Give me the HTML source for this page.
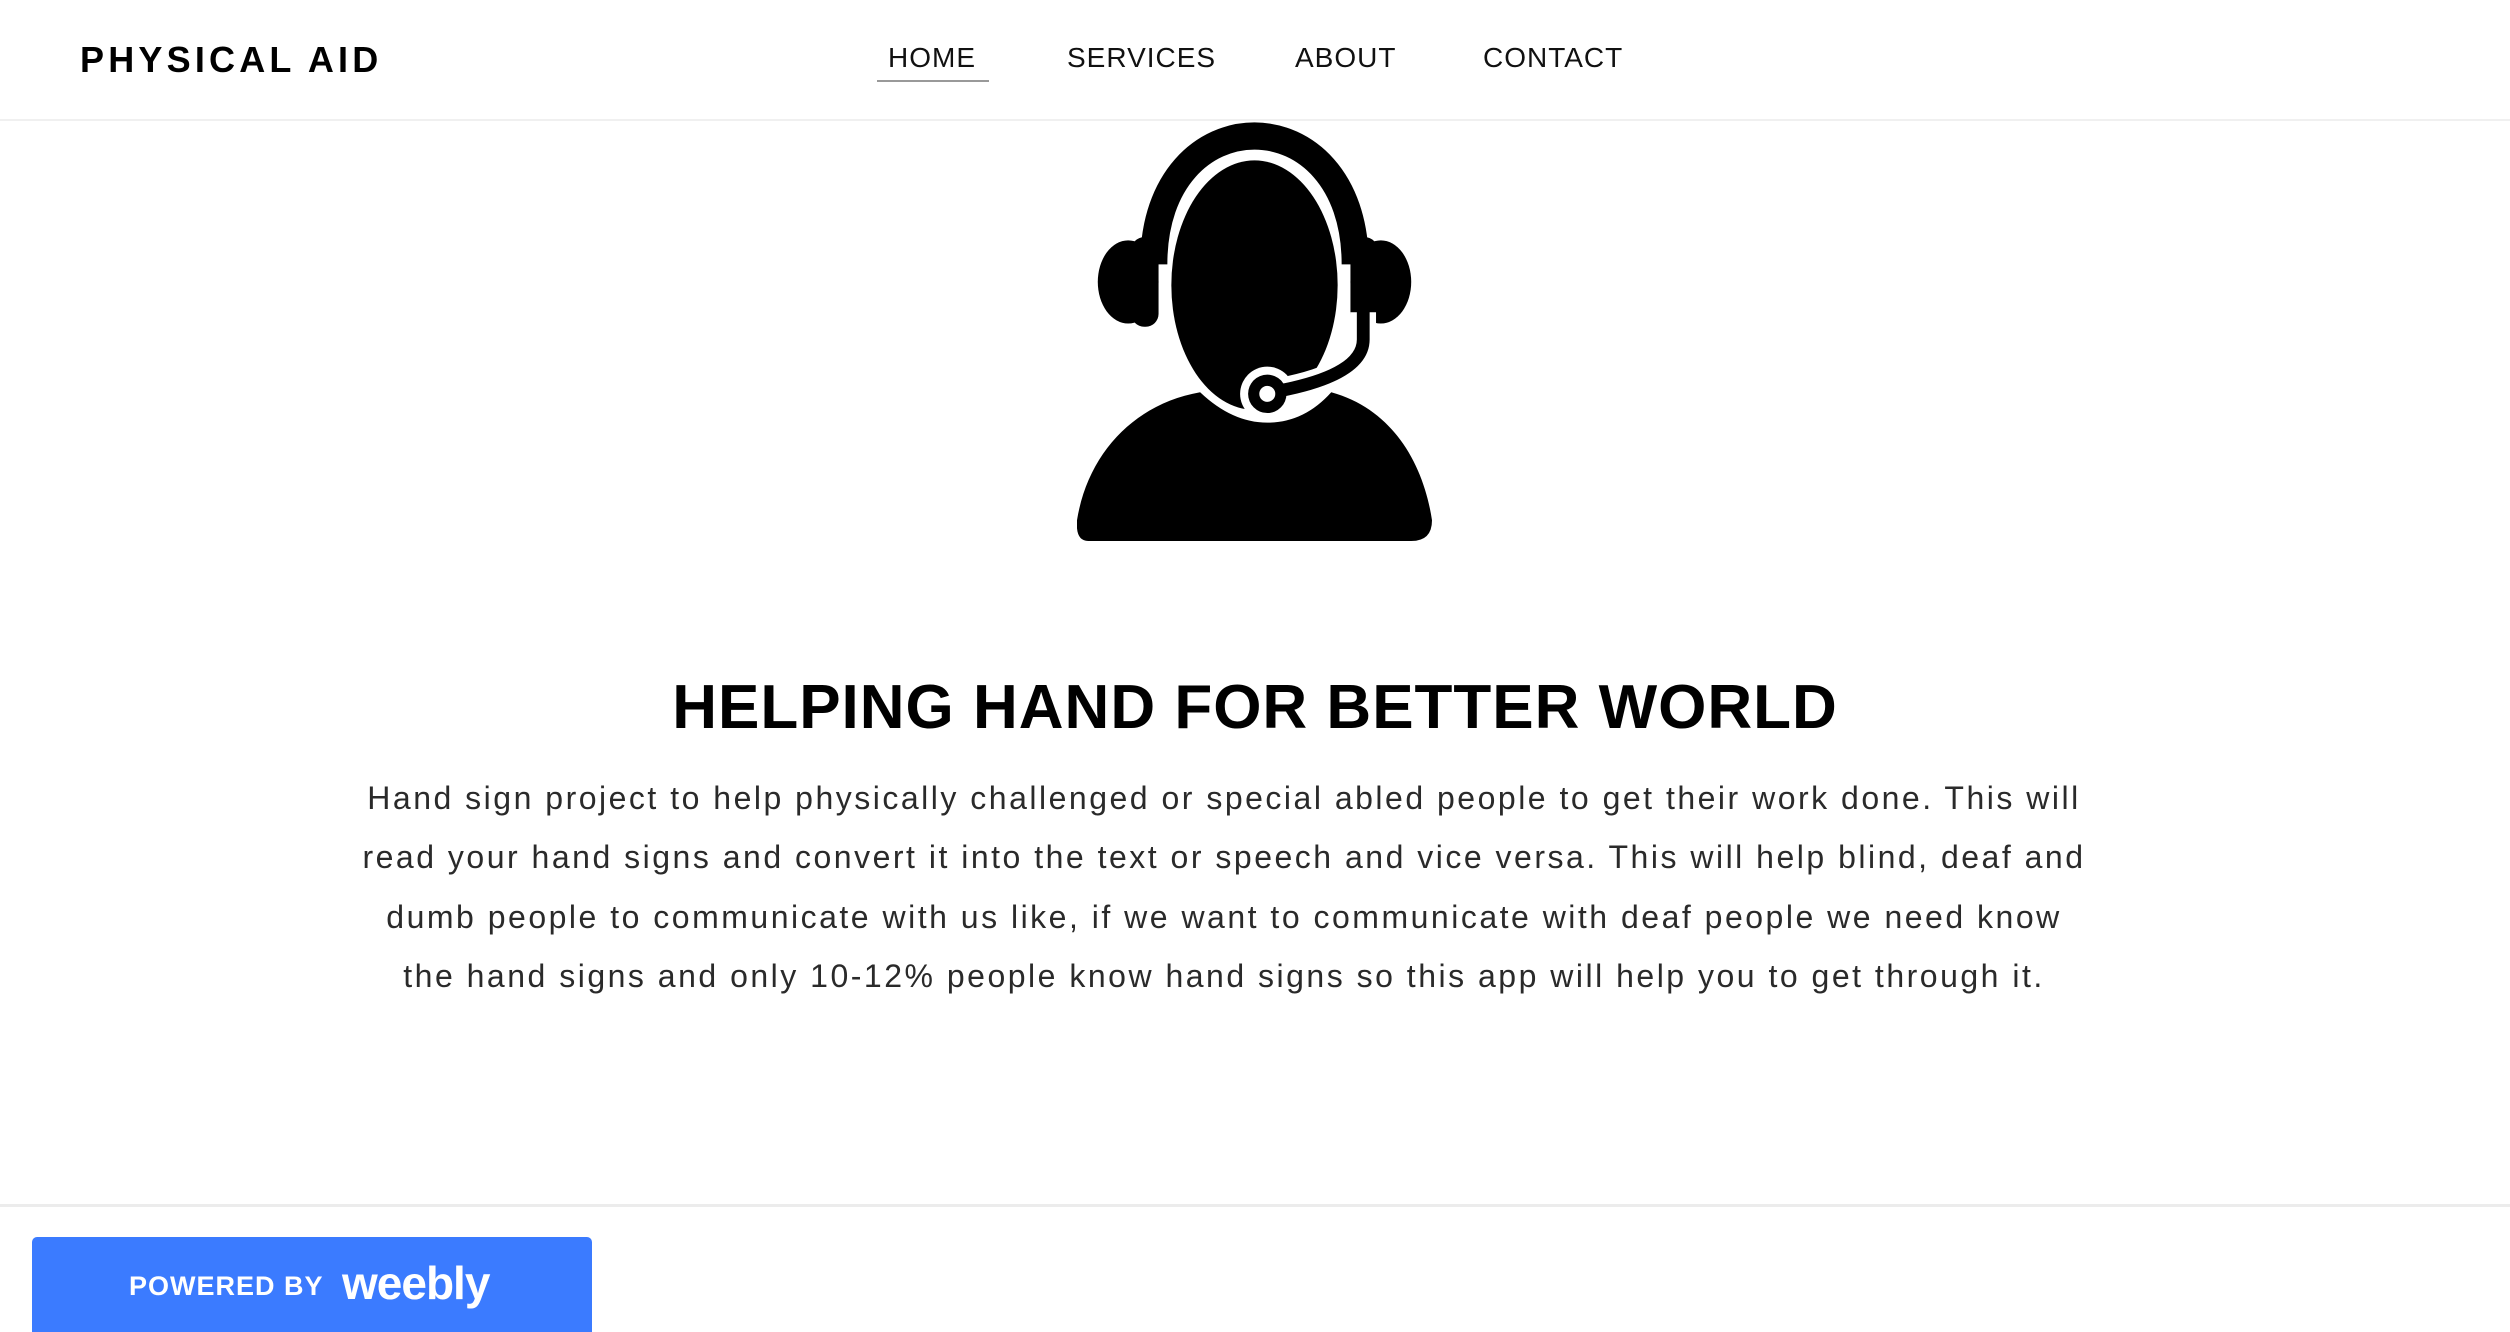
<!DOCTYPE html>
<html><head><meta charset="utf-8"><style>
html,body{margin:0;padding:0;background:#fff;width:2510px;height:1332px;overflow:hidden;position:relative;font-family:"Liberation Sans",sans-serif;color:#000}
.hdr{position:absolute;left:0;top:0;width:2510px;height:119px;border-bottom:2px solid #f0f0f0}
.logo{position:absolute;left:80px;top:38px;font-size:36px;font-weight:bold;letter-spacing:4.2px;line-height:44px}
.nav{position:absolute;top:40px;font-size:28px;letter-spacing:1px;line-height:36px;color:#111}
.ul{position:absolute;left:877px;top:80px;width:112px;height:2px;background:#999}
h1{position:absolute;left:0;width:2510px;top:668px;margin:0;text-align:center;font-size:62px;font-weight:bold;letter-spacing:1px;line-height:80px}
.p{position:absolute;left:200px;width:2048px;top:769px;text-align:center;font-size:32px;line-height:59.3px;letter-spacing:2.5px;color:#2a2a2a}
.ft{position:absolute;left:0;top:1204px;width:2510px;height:3px;background:#ececec}
.wb{position:absolute;left:32px;top:1237px;width:560px;height:95px;background:#3b7bff;border-radius:5px 5px 0 0;color:#fff}
.wb .a{position:absolute;left:97px;top:34px;font-size:27px;font-weight:bold;letter-spacing:1px}
.wb .b{position:absolute;left:310px;top:19px;font-size:46px;font-weight:bold;letter-spacing:-1px}
</style></head><body>
<div class="hdr">
<div class="logo">PHYSICAL AID</div>
<div class="nav" style="left:888px">HOME</div>
<div class="nav" style="left:1067px">SERVICES</div>
<div class="nav" style="left:1295px">ABOUT</div>
<div class="nav" style="left:1483px">CONTACT</div>
<div class="ul"></div>
</div>
<svg style="position:absolute;left:1077px;top:122px" width="355" height="419" viewBox="673 76 222 262">
<path d="M721,165 C721,58 847,58 847,165" fill="none" stroke="#000" stroke-width="17"/>
<ellipse cx="705" cy="176" rx="19" ry="26" fill="#000"/>
<rect x="707" y="148" width="17" height="56" rx="8" fill="#000"/>
<ellipse cx="863" cy="176" rx="19" ry="26" fill="#000"/>
<rect x="844" y="148" width="17" height="56" rx="8" fill="#000"/>
<ellipse cx="784" cy="178" rx="52" ry="78" fill="#000"/>
<path d="M680,338 Q672,338 673,325 C680,282 710,252 750,245 Q770,264 792,264 Q815,264 832,245 C872,256 890,292 895,325 Q895,338 882,338 Z" fill="#000"/>
<path d="M852,195 L852,212 Q852,234 800,244" fill="none" stroke="#fff" stroke-width="16"/>
<circle cx="792" cy="246" r="17" fill="#fff"/>
<path d="M852,195 L852,212 Q852,234 800,244" fill="none" stroke="#000" stroke-width="8" stroke-linecap="round"/>
<circle cx="792" cy="246" r="12" fill="#000"/>
<circle cx="792" cy="246" r="5" fill="#fff"/>
</svg>
<h1>HELPING HAND FOR BETTER WORLD</h1>
<div class="p">Hand sign project to help physically challenged or special abled people to get their work done. This will<br>read your hand signs and convert it into the text or speech and vice versa. This will help blind, deaf and<br>dumb people to communicate with us like, if we want to communicate with deaf people we need know<br>the hand signs and only 10-12% people know hand signs so this app will help you to get through it.</div>
<div class="ft"></div>
<div class="wb"><span class="a">POWERED BY</span><span class="b">weebly</span></div>
</body></html>
